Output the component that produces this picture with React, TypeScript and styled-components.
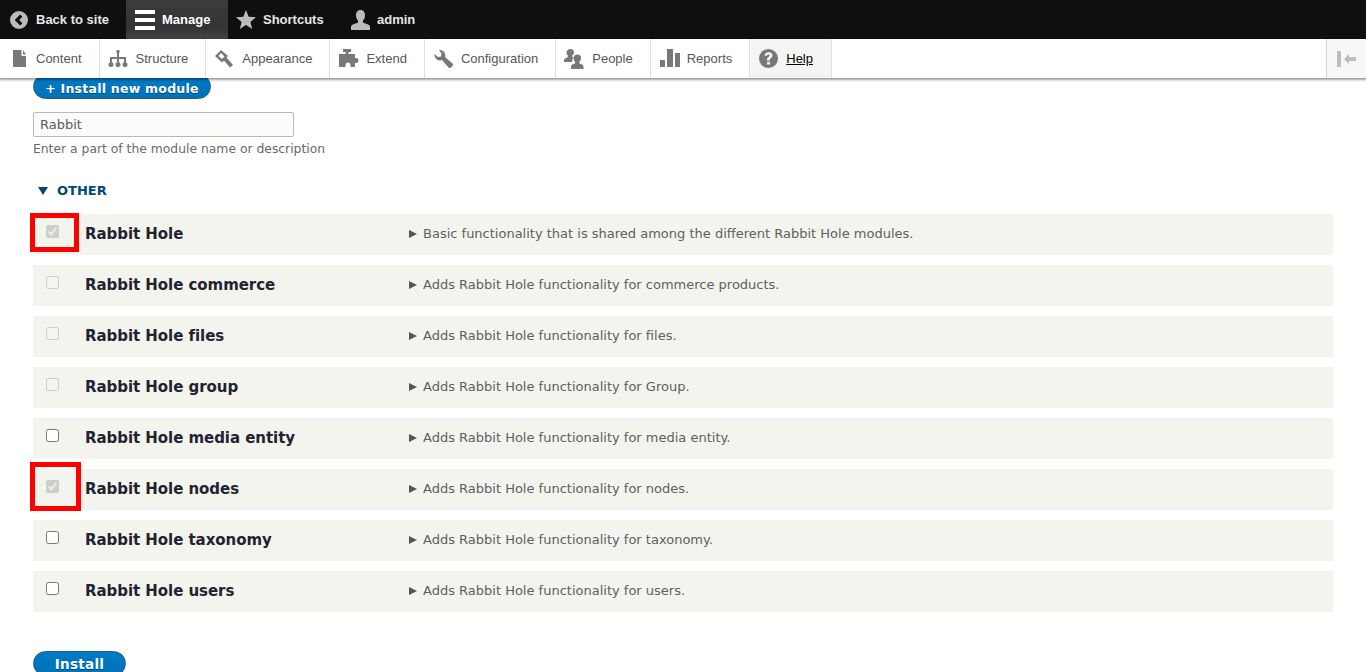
import React from "react";
import styled, { createGlobalStyle } from "styled-components";

const Global = createGlobalStyle`
  html, body { margin: 0; padding: 0; background: #fff; height: 100%; overflow: hidden; }
`;

const Page = styled.div`
  position: relative;
  width: 1366px;
  height: 672px;
  overflow: hidden;
  display: flex;
  flex-direction: column;
  font-family: "DejaVu Sans", Verdana, sans-serif;
`;

const TopBar = styled.div`
  flex: none;
  height: 39px;
  background: #0f0f0f;
  display: flex;
  font: bold 13px "Liberation Sans", Arial, sans-serif;
  color: #ddd;
`;

const TopItem = styled.a<{ $w: number; $pad: number; $active?: boolean }>`
  box-sizing: border-box;
  width: ${(p) => p.$w}px;
  padding-left: ${(p) => p.$pad}px;
  display: flex;
  align-items: center;
  color: ${(p) => (p.$active ? "#fff" : "#e6e6e6")};
  background: ${(p) => (p.$active ? "linear-gradient(#3c3c3c, #333 70%, #444)" : "transparent")};
`;

const TopIcon = styled.svg<{ $gap: number }>`
  flex: none;
  margin-right: ${(p) => p.$gap}px;
`;

const Tray = styled.div`
  position: relative;
  z-index: 2;
  flex: none;
  height: 39px;
  background: #fff;
  box-shadow: 0 1px 2px 1px rgba(0, 0, 0, 0.38);
  display: flex;
  justify-content: space-between;
  font: 13px "Liberation Sans", Arial, sans-serif;
  color: #565656;
`;

const TrayList = styled.div`
  display: flex;
`;

const TrayItem = styled.a<{ $active?: boolean }>`
  position: relative;
  padding: 0 ${(p) => (p.$active ? 18 : 17)}px 0 36px;
  display: flex;
  align-items: center;
  border-right: 1px solid #e0e0dc;
  background: ${(p) => (p.$active ? "#f4f5f3" : "#fff")};
  color: ${(p) => (p.$active ? "#000" : "#565656")};
  text-decoration: ${(p) => (p.$active ? "underline" : "none")};
`;

const TrayIcon = styled.svg<{ $x: number }>`
  position: absolute;
  left: ${(p) => p.$x}px;
  top: 10px;
`;

const Toggle = styled.div`
  width: 40px;
  box-sizing: border-box;
  border-left: 1px solid #d4d4d4;
  background: #f7f7f6;
  display: flex;
  align-items: center;
  justify-content: center;
`;

const Main = styled.main`
  flex: 1;
  min-height: 0;
  overflow: hidden;
  padding: 0 33px;
  display: flex;
  flex-direction: column;
  align-items: flex-start;
  & > * {
    flex: none;
  }
`;

const PillButton = styled.a`
  box-sizing: border-box;
  display: flex;
  align-items: center;
  justify-content: center;
  background: linear-gradient(#007bc6, #0071b8);
  border: 1px solid #1e5c90;
  color: #fff;
  font-weight: 700;
  text-shadow: 0 1px rgba(0, 0, 0, 0.4);
  border-radius: 20px;
`;

const InstallNew = styled(PillButton)`
  margin-top: -4px;
  width: 178px;
  height: 25px;
  padding-top: 4px;
  font-size: 12.5px;
  letter-spacing: 0.24px;
`;

const Search = styled.input`
  box-sizing: border-box;
  margin: 13px 0 0;
  width: 261px;
  height: 25px;
  padding: 0 6px;
  border: 1px solid #b8b8b8;
  border-radius: 2px;
  background: #fcfcfa;
  color: #595959;
  font: 13px "DejaVu Sans", Verdana, sans-serif;
  outline: none;
`;

const Help = styled.div`
  margin-top: 5px;
  height: 15px;
  line-height: 15px;
  font-size: 12.35px;
  color: #68696b;
`;

const GroupHead = styled.div`
  margin: 26px 0 0 5px;
  height: 16px;
  display: flex;
  align-items: center;
  gap: 9px;
  font-size: 13px;
  line-height: 16px;
  font-weight: 700;
  text-transform: uppercase;
  color: #004875;
`;

const DownArrow = styled.span`
  width: 0;
  height: 0;
  border-left: 5px solid transparent;
  border-right: 5px solid transparent;
  border-top: 8px solid #004875;
`;

const Rows = styled.div`
  align-self: stretch;
  margin-top: 15px;
  display: flex;
  flex-direction: column;
  gap: 10px;
`;

const Row = styled.div`
  position: relative;
  box-sizing: border-box;
  height: 41px;
  padding-bottom: 2px;
  background: #f3f4ee;
  display: flex;
  align-items: center;
`;

const Check = styled.input`
  flex: none;
  margin: 0 26px 4px 13px;
  width: 13px;
  height: 13px;
`;

const Name = styled.div`
  flex: none;
  width: 324px;
  font-size: 15px;
  font-weight: 700;
  color: #222330;
  letter-spacing: -0.05px;
`;

const Desc = styled.div`
  display: flex;
  align-items: center;
  gap: 6px;
  font-size: 13px;
  color: #5f5f5f;
`;

const RightArrow = styled.span`
  width: 0;
  height: 0;
  border-top: 4px solid transparent;
  border-bottom: 4px solid transparent;
  border-left: 8px solid #555;
`;

const Install = styled(PillButton)`
  margin-top: 39px;
  width: 93px;
  height: 25px;
  font-size: 13.5px;
  letter-spacing: 0.27px;
`;

const Highlight = styled.div<{ $x: number; $y: number; $w: number; $h: number }>`
  position: absolute;
  z-index: 3;
  box-sizing: border-box;
  left: ${(p) => p.$x}px;
  top: ${(p) => p.$y}px;
  width: ${(p) => p.$w}px;
  height: ${(p) => p.$h}px;
  border: 5px solid #f00;
  pointer-events: none;
`;

const modules = [
  { name: "Rabbit Hole", desc: "Basic functionality that is shared among the different Rabbit Hole modules.", checked: true, disabled: true },
  { name: "Rabbit Hole commerce", desc: "Adds Rabbit Hole functionality for commerce products.", disabled: true },
  { name: "Rabbit Hole files", desc: "Adds Rabbit Hole functionality for files.", disabled: true },
  { name: "Rabbit Hole group", desc: "Adds Rabbit Hole functionality for Group.", disabled: true },
  { name: "Rabbit Hole media entity", desc: "Adds Rabbit Hole functionality for media entity." },
  { name: "Rabbit Hole nodes", desc: "Adds Rabbit Hole functionality for nodes.", checked: true, disabled: true },
  { name: "Rabbit Hole taxonomy", desc: "Adds Rabbit Hole functionality for taxonomy." },
  { name: "Rabbit Hole users", desc: "Adds Rabbit Hole functionality for users." },
];

const G = "#787878";

const circle = (cx: number, cy: number, r: number) =>
  `M${cx - r} ${cy}a${r} ${r} 0 1 0 ${2 * r} 0a${r} ${r} 0 1 0 ${-2 * r} 0z`;

const tray = [
  { label: "Content", x: 13, d: "M0 1h8.500v6H13v11H0z M10 1l3 4.500h-3z" },
  {
    label: "Structure",
    x: 8,
    d: `M8.500 1h3v3H11v4h7v5h-2v-3h-5v3H9v-3H4v3H2V8h7V4H8.500z ${circle(3, 15.5, 2.5)} ${circle(10, 15.5, 2.5)} ${circle(17, 15.5, 2.5)}`,
  },
  { label: "Appearance", x: 9, d: "M6 1L0 7l7 6.500 2-2 6 7L18 16l-6.500-7.500L13 7z M6 4L3.500 7 7 10l2.500-2.500z" },
  { label: "Extend", x: 9, d: "M4 0h8v3h-2.500v2H16v4h1a2.500 2.500 0 1 1 0 5h-1v4h-4.500v-2a2.500 2.500 0 0 0-5 0v2H0V5h6.500V3H4z" },
  { label: "Configuration", x: 9, d: "M5 1a5.500 5.500 0 0 1 6 7l7.500 6.500a2 2 0 0 1 0 2.500l-1.500 1.500a2 2 0 0 1-2.500 0L8 11a5.500 5.500 0 0 1-7.500-6L4 8l3-.5.500-3z" },
  {
    label: "People",
    x: 8,
    d: "M6.500 0a3.500 3.500 0 0 1 3.500 3.500c0 1.300-.6 2.300-1.700 2.800V8l1.200.5C8.500 9.500 8 11 8.300 13H0v-2c0-1.300 2.500-2 3.700-2.700V6.300C3 5.700 2.500 4.700 2.500 3.500A3.800 3.500 0 0 1 6.500 0z M13.500 5.500a3.500 3.700 0 0 1 3.500 3.800c0 1.500-.6 2.600-1.500 3.300v2c1.700.6 4 1.200 4 2.900V20H7v-2.500c0-1.700 2.300-2.300 4-2.900v-2c-.9-.7-1.500-1.800-1.500-3.300a4 3.800 0 0 1 4-3.800z",
  },
  { label: "Reports", x: 9, d: "M0 11h5v7H0z M7 0h6v18H7z M15 4h5v14h-5z" },
];

export default function App() {
  return (
    <Page>
      <Global />
      <TopBar>
        <TopItem $w={126} $pad={10}>
          <TopIcon $gap={8} width="18" height="18" viewBox="0 0 18 18">
            <path fill="#bbb" fillRule="evenodd" d="M9 0a9 9 0 1 1 0 18A9 9 0 0 1 9 0zM10.200 3.500L4.700 9l5.500 5.500 2.200-2.200L9.100 9l3.300-3.300z" />
          </TopIcon>
          Back to site
        </TopItem>
        <TopItem $w={102} $pad={9} $active>
          <TopIcon $gap={7} width="20" height="20" viewBox="0 0 20 20">
            <path fill="#fff" d="M0 0h20v4H0zM0 8h20v4H0zM0 16h20v4H0z" />
          </TopIcon>
          Manage
        </TopItem>
        <TopItem $w={123} $pad={8}>
          <TopIcon $gap={7} width="20" height="19" viewBox="0 0 20 19">
            <path fill="#bbb" d="M10 0l2.700 6.700 7.300.6-5.600 4.700 1.800 7L10 15l-6.200 4 1.800-7L0 7.300l7.300-.6z" />
          </TopIcon>
          Shortcuts
        </TopItem>
        <TopItem $w={200} $pad={0}>
          <TopIcon $gap={7} width="19" height="20" viewBox="0 0 19 20">
            <path fill="#bbb" d="M9.500 0c3 0 4.500 2.300 4.500 5.200 0 2.400-1 4.300-2 5.400v2.200c2.700.9 7 1.700 7 4V20H0v-3.200c0-2.300 4.300-3.100 7-4v-2.200c-1-1.100-2-3-2-5.400C5 2.300 6.500 0 9.500 0z" />
          </TopIcon>
          admin
        </TopItem>
      </TopBar>
      <Tray>
        <TrayList>
          {tray.map((t) => (
            <TrayItem key={t.label}>
              <TrayIcon $x={t.x} width="20" height="20" viewBox="0 0 20 20">
                <path fill={G} fillRule={t.label === "Appearance" ? "evenodd" : "nonzero"} d={t.d} />
              </TrayIcon>
              {t.label}
            </TrayItem>
          ))}
          <TrayItem $active>
            <TrayIcon $x={9} width="19" height="19" viewBox="0 0 18 18">
              <path fill={G} fillRule="evenodd" d="M9 0a9 9 0 1 1 0 18A9 9 0 0 1 9 0zM9 3C6.700 3 5.300 4.300 5.200 6.300h2.500c.1-.8.500-1.200 1.200-1.200.7 0 1.200.4 1.200 1 0 1.300-2.500 1.500-2.500 4.200V11h2.600v-.4c0-1.900 2.600-2.200 2.600-4.700C12.800 4.100 11.200 3 9 3zM7.700 12v2.600h2.600V12z" />
            </TrayIcon>
            Help
          </TrayItem>
        </TrayList>
        <Toggle>
          <svg width="19" height="16" viewBox="0 0 19 16">
            <path fill="#bdbdbd" d="M0 0h4v16H0zM7 8l5-5v3h7v4h-7v3z" />
          </svg>
        </Toggle>
      </Tray>
      <Main>
        <InstallNew>+ Install new module</InstallNew>
        <Search defaultValue="Rabbit" />
        <Help>Enter a part of the module name or description</Help>
        <GroupHead>
          <DownArrow />
          Other
        </GroupHead>
        <Rows>
          {modules.map((m) => (
            <Row key={m.name}>
              <Check type="checkbox" disabled={m.disabled} defaultChecked={m.checked} />
              <Name>{m.name}</Name>
              <Desc>
                <RightArrow />
                {m.desc}
              </Desc>
            </Row>
          ))}
        </Rows>
        <Install>Install</Install>
      </Main>
      <Highlight $x={30} $y={213} $w={49} $h={39} />
      <Highlight $x={30} $y={462} $w={51} $h={49} />
    </Page>
  );
}
